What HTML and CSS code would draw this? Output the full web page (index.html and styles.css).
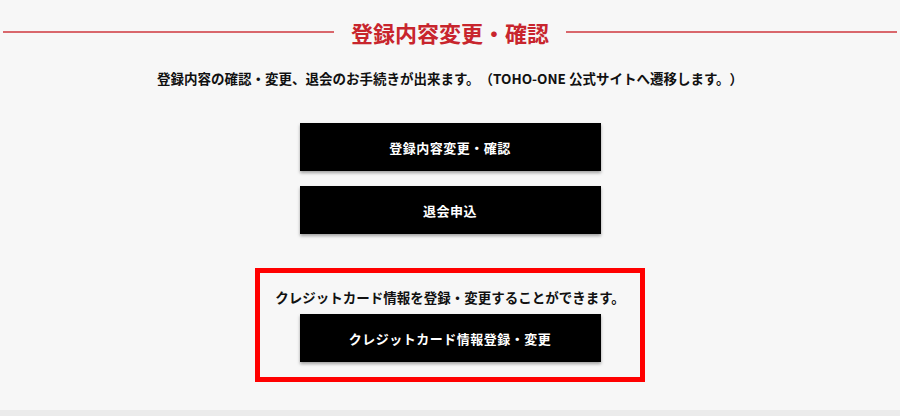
FILE: index.html
```html
<!DOCTYPE html>
<html lang="ja">
<head>
<meta charset="UTF-8" />
<meta name="viewport" content="width=device-width, initial-scale=1" />
<title>登録内容変更・確認</title>
<link rel="stylesheet" href="styles.css">
</head>
<body>

  <section class="member-section">
    <h2 class="section-title">登録内容変更・確認</h2>

    <p class="lead">登録内容の確認・変更、退会のお手続きが出来ます。（TOHO-ONE 公式サイトへ遷移します。）</p>

    <div class="btn-list">
      <a class="btn" href="#">登録内容変更・確認</a>
      <a class="btn" href="#">退会申込</a>
    </div>

    <div class="card-box">
      <p class="card-text">クレジットカード情報を登録・変更することができます。</p>
      <a class="btn" href="#">クレジットカード情報登録・変更</a>
    </div>
  </section>

  <footer class="page-foot"></footer>

</body>
</html>
```

FILE: styles.css
```css
body {
  margin: 0;
  background: #f7f7f7;
  font-family: "Noto Sans CJK JP", "Noto Sans", sans-serif;
  color: #111;
  text-spacing-trim: space-all;
}
.member-section {
  height: 410px;
  box-sizing: border-box;
  padding: 21px 3px 0;
  display: flex;
  flex-direction: column;
  align-items: center;
}
.section-title {
  width: 100%;
  margin: 0;
  display: flex;
  align-items: center;
  gap: 17px;
  font-size: 22px;
  line-height: 22px;
  font-weight: 700;
  color: #c8252d;
}
.section-title::before,
.section-title::after {
  content: "";
  flex: 1;
  height: 2px;
  background: #d9676c;
}
.lead {
  margin: 25px 0 0;
  font-size: 13.5px;
  line-height: 20px;
  font-weight: 700;
}
.btn-list {
  margin-top: 35px;
  display: flex;
  flex-direction: column;
  gap: 15px;
}
.btn {
  display: flex;
  align-items: center;
  justify-content: center;
  width: 301px;
  height: 48px;
  background: #000;
  color: #fff;
  font-size: 13px;
  font-weight: 700;
  letter-spacing: 0.5px;
  text-decoration: none;
  box-shadow: 0 2px 3px rgba(0,0,0,0.35);
}
.card-box {
  margin-top: 34px;
  width: 390px;
  box-sizing: border-box;
  border: 5px solid #ff0000;
  padding: 14px 0 15px;
  display: flex;
  flex-direction: column;
  align-items: center;
}
.card-text {
  margin: 0 0 7px;
  font-size: 13.5px;
  line-height: 20px;
  font-weight: 700;
}
.page-foot {
  height: 6px;
  background: #ebebeb;
}
```
